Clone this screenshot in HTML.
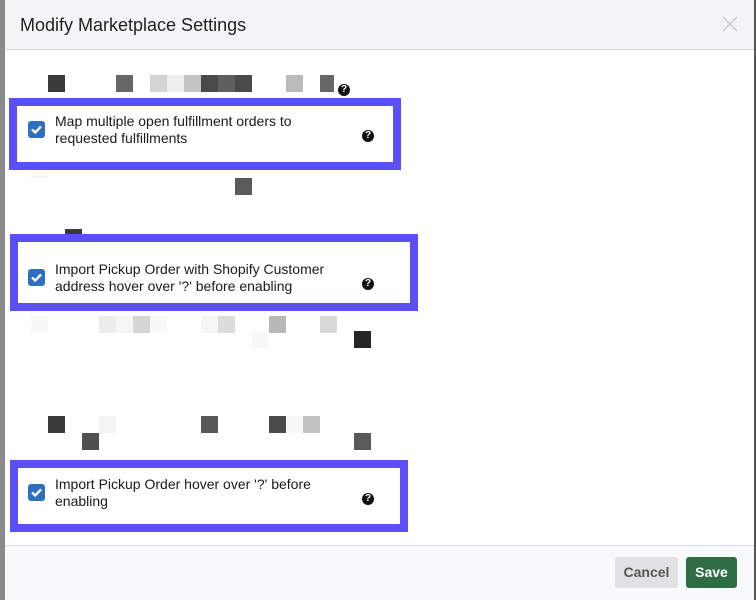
<!DOCTYPE html>
<html><head><meta charset="utf-8"><style>
*{margin:0;padding:0;box-sizing:border-box}
body{width:756px;height:600px;overflow:hidden;background:#fff;font-family:"Liberation Sans",Arial,sans-serif;position:relative}
.a{position:absolute}
.bg{left:0;top:0;width:5px;height:600px;background:#8a8a8a}
.bgr{left:754px;top:0;width:2px;height:600px;background:#555}
.modal{left:5px;top:0;width:749px;height:600px;background:#fff;border-radius:4px}
.hdr{left:5px;top:0;width:749px;height:50px;background:#f4f5f7;border-bottom:1px solid #d6d8db}
.ttl{left:20px;top:15px;font-size:18px;color:#222}
.ftr{left:5px;top:545px;width:749px;height:55px;background:#f8f9fb;border-top:1px solid #dcdfe2}
.box{border:8px solid #5b4ff5;background:#fff}
.cb{width:17px;height:17px;background:#2f6fbf;border-radius:3px}
.cb svg{display:block}
.t{font-size:14px;line-height:17px;color:#1a1a1a}
.q{width:12px;height:12px;border-radius:50%;background:#111;color:#fff;font-size:10px;font-weight:bold;text-align:center;line-height:12px}
.s{width:17px;height:17px}
.btn{font-size:14px;font-weight:bold;border-radius:3px;text-align:center;line-height:31px;height:31px}
</style></head><body>
<div class="a bg"></div>
<div class="a bgr"></div>
<div class="a modal"></div>
<div class="a hdr"></div>
<div class="a ttl">Modify Marketplace Settings</div>
<svg class="a" style="left:722px;top:16px" width="16" height="16"><path d="M1 1L15 15M15 1L1 15" stroke="#c5c9ce" stroke-width="1.3"/></svg>

<div class="a s" style="left:48px;top:75px;background:#3a3a3a"></div>
<div class="a s" style="left:116px;top:75px;background:#666"></div>
<div class="a s" style="left:150px;top:75px;background:#d4d4d4"></div>
<div class="a s" style="left:167px;top:75px;background:#eee"></div>
<div class="a s" style="left:184px;top:75px;background:#c4c4c4"></div>
<div class="a s" style="left:201px;top:75px;background:#4a4a4a"></div>
<div class="a s" style="left:218px;top:75px;background:#5f5f5f"></div>
<div class="a s" style="left:235px;top:75px;background:#4a4a4a"></div>
<div class="a s" style="left:286px;top:75px;background:#bbb"></div>
<div class="a s" style="left:320px;top:75px;width:14px;background:#666"></div>
<div class="a q" style="left:338px;top:84px">?</div>

<div class="a box" style="left:9px;top:98px;width:392px;height:72px"></div>
<div class="a cb" style="left:28px;top:121px"><svg width="17" height="17"><path d="M4 8.5L7.2 11.5L13 5.5" stroke="#fff" stroke-width="2.4" fill="none"/></svg></div>
<div class="a t" style="left:55px;top:113px">Map multiple open fulfillment orders to<br>requested fulfillments</div>
<div class="a q" style="left:362px;top:130px">?</div>

<div class="a s" style="left:31px;top:170px;background:#f8f8f8;height:8px"></div>
<div class="a s" style="left:235px;top:178px;background:#5a5a5a"></div>
<div class="a s" style="left:65px;top:229px;background:#3a3a3a;height:8px"></div>

<div class="a box" style="left:10px;top:234px;width:408px;height:77px"></div>
<div class="a cb" style="left:28px;top:269px"><svg width="17" height="17"><path d="M4 8.5L7.2 11.5L13 5.5" stroke="#fff" stroke-width="2.4" fill="none"/></svg></div>
<div class="a t" style="left:55px;top:261px">Import Pickup Order with Shopify Customer<br>address hover over '?' before enabling</div>
<div class="a q" style="left:362px;top:278px">?</div>

<div class="a s" style="left:31px;top:316px;background:#f8f8f8"></div>
<div class="a s" style="left:99px;top:316px;background:#ececec"></div>
<div class="a s" style="left:116px;top:316px;background:#f6f6f6"></div>
<div class="a s" style="left:133px;top:316px;background:#d6d6d6"></div>
<div class="a s" style="left:150px;top:316px;background:#f8f8f8"></div>
<div class="a s" style="left:201px;top:316px;background:#f6f6f6"></div>
<div class="a s" style="left:218px;top:316px;background:#dcdcdc"></div>
<div class="a s" style="left:269px;top:316px;background:#b8b8b8"></div>
<div class="a s" style="left:320px;top:316px;background:#dadada"></div>
<div class="a s" style="left:252px;top:331px;background:#f8f8f8"></div>
<div class="a s" style="left:354px;top:331px;background:#252525"></div>

<div class="a s" style="left:48px;top:416px;background:#3a3a3a"></div>
<div class="a s" style="left:99px;top:416px;background:#f3f3f3"></div>
<div class="a s" style="left:201px;top:416px;background:#575757"></div>
<div class="a s" style="left:269px;top:416px;background:#4a4a4a"></div>
<div class="a s" style="left:286px;top:416px;background:#f8f8f8"></div>
<div class="a s" style="left:303px;top:416px;background:#c2c2c2"></div>
<div class="a s" style="left:82px;top:433px;background:#505050"></div>
<div class="a s" style="left:354px;top:433px;background:#5a5a5a"></div>

<div class="a box" style="left:10px;top:460px;width:398px;height:72px"></div>
<div class="a cb" style="left:28px;top:484px"><svg width="17" height="17"><path d="M4 8.5L7.2 11.5L13 5.5" stroke="#fff" stroke-width="2.4" fill="none"/></svg></div>
<div class="a t" style="left:55px;top:476px">Import Pickup Order hover over '?' before<br>enabling</div>
<div class="a q" style="left:362px;top:493px">?</div>

<div class="a ftr"></div>
<div class="a btn" style="left:615px;top:557px;width:63px;background:#e0e1e3;color:#555">Cancel</div>
<div class="a btn" style="left:686px;top:557px;width:51px;background:#2f6d44;color:#fff">Save</div>
</body></html>
